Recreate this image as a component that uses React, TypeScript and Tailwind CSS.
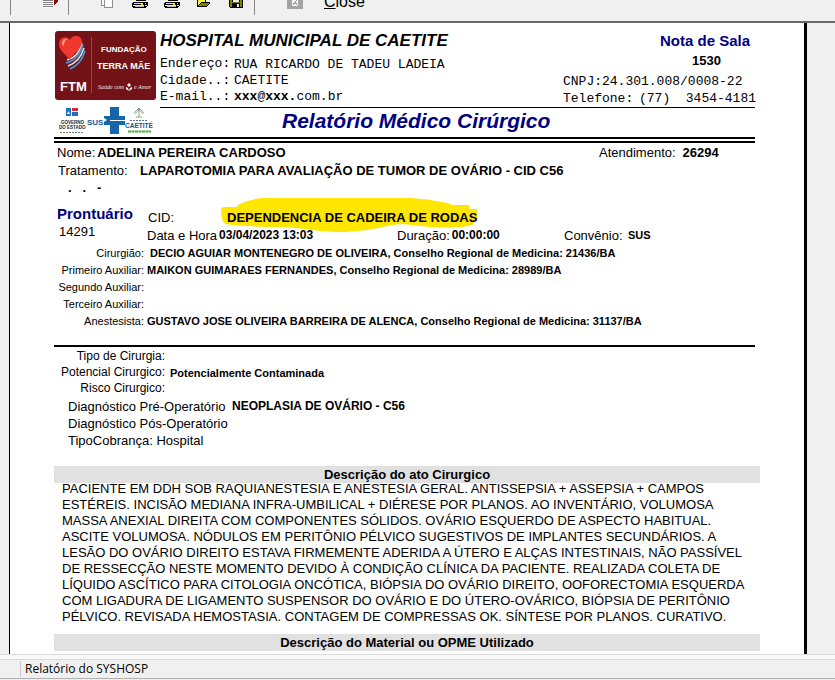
import type { ReactNode } from "react";

function FundacaoLogo() {
  return (
    <svg viewBox="0 0 101 69" className="block h-[69px] w-[101px]" role="img" aria-label="Fundação Terra Mãe">
      <rect width="101" height="69" rx="3" fill="#741317" />
      <g fill="none" strokeWidth="1.6">
        <path d="M12 29c8-2 12-7 15-17" stroke="#f4d9dc" />
        <path d="M11 32c9-2 14-8 17-18" stroke="#3f9bd4" />
        <path d="M13 35c8-3 13-8 16-18" stroke="#cfe4f2" />
        <path d="M15 38c7-3 12-8 15-18" stroke="#3f9bd4" />
      </g>
      <path d="M15 9C12 4 4 6 4 13c0 7 7 10 11 16 2-6 11-10 12-17 0-5-2-7-6-7-3 0-5 1-6 4z" fill="#f0382f" />
      <path d="M7 12c0-4 4-5 6-4-3 1-4 3-4 7-1 0-2-2-2-3z" fill="#ff9a8a" />
      <path d="M36.5 6V62" stroke="#94484b" strokeWidth="1" />
      <g fill="#fff" fontFamily="'Liberation Sans',sans-serif" fontWeight="700">
        <text x="5" y="60" fontSize="13">FTM</text>
        <text x="46" y="21" fontSize="8">FUNDAÇÃO</text>
        <text x="42" y="38" fontSize="9">TERRA MÃE</text>
      </g>
      <g fill="#f3e3e4" fontFamily="'Liberation Serif',serif" fontStyle="italic" fontSize="6">
        <text x="43" y="58">Saúde com</text>
        <text x="79" y="58">e Amor</text>
      </g>
      <path d="M74 52l2 2-2 2-2-2zM71 56l2 1 1 3-3-2zM77 56l-2 1-1 3 3-2z" fill="#fff" />
    </svg>
  );
}

function PartnerLogos() {
  return (
    <svg viewBox="0 0 101 29" className="block h-[29px] w-[101px]" role="img" aria-label="Governo do Estado, SUS, Caetité">
      <rect x="11" y="2" width="5" height="8" fill="#1d6fc0" />
      <rect x="17" y="2" width="6" height="3" fill="#e02530" />
      <rect x="17" y="6" width="6" height="4" fill="#1d6fc0" />
      <path d="M13.500 5l-1.500 3h3z" fill="#fff" />
      <g fill="#222" fontFamily="'Liberation Sans',sans-serif" fontWeight="700" fontSize="4.500">
        <text x="6" y="18">GOVERNO</text>
        <text x="4" y="23">DO ESTADO</text>
      </g>
      <path d="M5 26.500H28" stroke="#777" strokeDasharray="2 1" />
      <text x="32" y="19" fill="#0f5c9c" fontFamily="'Liberation Sans',sans-serif" fontWeight="700" fontSize="8">
        SUS
      </text>
      <path d="M55 1h9v9h6v9h-6v9h-9v-9h-6v-3l3-2-3-2v-2h6z" fill="#1565a9" />
      <path d="M55 14.500h15" fill="none" stroke="#fff" strokeWidth="1" />
      <path d="M84 2v9M79 7l5-5 5 5M80 8c2-2 3-3 4-5 1 2 2 3 4 5M81 11h6" fill="none" stroke="#6a8f6a" strokeWidth="0.8" />
      <path d="M75 14.500H93" stroke="#54708a" strokeDasharray="2 1" />
      <text x="70" y="22" fill="#0e4f90" fontFamily="'Liberation Sans',sans-serif" fontWeight="700" fontSize="6.500">
        CAETITÉ
      </text>
      <path d="M73 25.500H96" stroke="#4aa83c" strokeWidth="2" strokeDasharray="3 0.5" />
    </svg>
  );
}

function ToolButton({ label, className, children }: { label: string; className: string; children: ReactNode }) {
  return (
    <button type="button" aria-label={label} className={`block h-4 w-4 shrink-0 ${className}`}>
      <svg viewBox="0 0 16 16" className="block h-4 w-4" shapeRendering="crispEdges">
        {children}
      </svg>
    </button>
  );
}

function PrinterGlyph() {
  return (
    <>
      <path d="M4 0h9v3H4z" fill="#fff" />
      <path d="M4 0.500h10M3 2.500h10" stroke="#000" />
      <path d="M2 2h13l1 1v3l-3 2H1L0 7V3z" fill="#000" />
      <path d="M2 3h9v1H2zM1 5h11v1H1zM13 3h1v1h-1zM13 5h2v1h-2z" fill="#e6e6e6" />
      <path d="M9 4h2v1H9z" fill="#f2e400" />
      <path d="M3 6h9v1H3z" fill="#b5b5b5" />
    </>
  );
}

function Separator({ className }: { className: string }) {
  return <span className={`h-[15px] w-px shrink-0 bg-[#868686] ${className}`} />;
}

function Toolbar() {
  return (
    <header className="flex h-[21px] shrink-0 items-start" role="toolbar">
      <Separator className="ml-[10px]" />
      <ToolButton label="Ir para página" className="ml-8">
        <path d="M0 0h10v8H0z" fill="#fff" />
        <path d="M0 0.500h10M0 2.500h10M0 4.500h10M0 6.500h10" stroke="#808080" />
        <path d="M11 0h4v2l-2 1-2 2z" fill="#8b0000" />
      </ToolButton>
      <Separator className="ml-[9px]" />
      <ToolButton label="Copiar" className="ml-8">
        <path d="M1 0h2v5H1zM4 0h7v7H4z" fill="#fff" />
        <path d="M0.500 0v5.500h3M3.500 0v7.500h8V0" fill="none" stroke="#909090" />
      </ToolButton>
      <ToolButton label="Configurar impressão" className="ml-[15px]">
        <PrinterGlyph />
      </ToolButton>
      <ToolButton label="Imprimir" className="ml-4">
        <PrinterGlyph />
      </ToolButton>
      <ToolButton label="Abrir" className="ml-4">
        <path d="M1 0h9v2h4v1l-4 4H1z" fill="#000" />
        <path d="M2 0h7v2H5L2 5z" fill="#f5ee3a" />
        <path d="M5 3h8l-3 3H2z" fill="#808000" />
      </ToolButton>
      <ToolButton label="Salvar" className="ml-4">
        <path d="M1 0h14v8H2L1 7z" fill="#000" />
        <path d="M2 0h2v7H2zM12 0h2v7h-2zM4 2h8v1H4z" fill="#808000" />
        <path d="M5 0h6v2H5zM9 4h2v3H9z" fill="#e9e9e9" />
      </ToolButton>
      <Separator className="ml-[10px]" />
      <ToolButton label="Fechar visualização" className="ml-8">
        <path d="M0 0h16v9H0z" fill="#a3a3a3" />
        <path d="M5 0h6v6H5z" fill="#f4f4f4" />
        <path d="M6 5l2-3 2 3M10 0l-3 3" fill="none" stroke="#a3a3a3" />
      </ToolButton>
      <button type="button" className="-mt-2 ml-[21px] text-[16px] leading-5 text-black">
        <span className="underline">C</span>lose
      </button>
    </header>
  );
}

function ReportHeader() {
  return (
    <section className="flex h-[106px]">
      <div className="flex w-[105px] shrink-0 flex-col gap-[6px] pl-px">
        <FundacaoLogo />
        <PartnerLogos />
      </div>
      <div className="grow">
        <div className="ml-px flex h-[77px] justify-between border-b border-black">
          <div>
            <h1 className="text-[17px] leading-[19px] font-bold italic">HOSPITAL MUNICIPAL DE CAETITE</h1>
            <dl className="grid grid-cols-[74px_auto] pt-[5px] font-['Liberation_Mono',monospace] text-[13px] leading-[17px]">
              <dt>Endereço:</dt>
              <dd className="pt-px">RUA RICARDO DE TADEU LADEIA</dd>
              <dt className="-mt-px">Cidade..:</dt>
              <dd className="-mt-px">CAETITE</dd>
              <dt className="-mt-px">E-mail..:</dt>
              <dd className="-mt-px">
                <b className="font-bold">xxx</b>@<b className="font-bold">xxx.</b>com.br
              </dd>
            </dl>
          </div>
          <div className="w-[192px]">
            <h2 className="pr-[5px] text-right text-[15px] leading-[19px] font-bold text-[#000080]">Nota de Sala</h2>
            <p className="pt-[2px] pl-[95px] text-center text-[13px] leading-[17px] font-bold">1530</p>
            <dl className="grid grid-cols-[76px_auto] pt-1 font-['Liberation_Mono',monospace] text-[13px] leading-[17px] whitespace-pre">
              <div className="col-span-2 flex">
                <dt>CNPJ:</dt>
                <dd>24.301.008/0008-22</dd>
              </div>
              <dt>Telefone:</dt>
              <dd>(77)  3454-4181</dd>
            </dl>
          </div>
        </div>
        <h2 className="pl-[123px] text-[21px] leading-[26px] font-bold text-[#000080] italic">Relatório Médico Cirúrgico</h2>
      </div>
    </section>
  );
}

function Highlighter() {
  return (
    <svg viewBox="0 0 258 36" className="absolute -top-3 -left-[7px] -z-10 h-9 w-[258px]" aria-hidden="true">
      <path
        d="M1 12L3 10H17L18 8C26 4 34 2 42 1H190C205 2 222 4 233 8H249V12H257V23H254V27C245 31 230 31 210 30C195 29 185 26 172 28C150 33 135 35 118 35C100 35 85 31 60 30C40 30 15 29 6 27C2 25 1 20 1 12Z"
        fill="#ffe600"
      />
    </svg>
  );
}

function Patient() {
  return (
    <section className="pt-px text-[13px]">
      <div className="flex leading-[18px]">
        <p className="flex w-[545px] gap-[2px] pl-[3px]">
          Nome: <b className="font-bold">ADELINA PEREIRA CARDOSO</b>
        </p>
        <p>Atendimento:</p>
        <b className="pl-[7px] font-bold">26294</b>
      </div>
      <div className="flex leading-[18px]">
        <p className="w-[86px] pl-1">Tratamento:</p>
        <b className="font-bold">LAPAROTOMIA PARA AVALIAÇÃO DE TUMOR DE OVÁRIO - CID C56</b>
      </div>
      <p className="pl-[14px] leading-4 font-bold whitespace-pre">.   .   -</p>
      <div className="flex pt-[9px]">
        <div className="w-[93px] pl-[3px]">
          <h3 className="text-[15px] leading-[18px] font-bold text-[#000080]">Prontuário</h3>
          <p className="pl-[2px] leading-[17px]">14291</p>
        </div>
        <div className="pt-1">
          <div className="flex leading-[18px]">
            <p className="w-20 pl-px">CID:</p>
            <p className="relative isolate font-bold">
              <Highlighter />
              DEPENDENCIA DE CADEIRA DE RODAS
            </p>
          </div>
          <div className="flex leading-[17px]">
            <p className="flex w-[250px] gap-[2px]">
              Data e Hora <b className="text-[12px] font-bold">03/04/2023 13:03</b>
            </p>
            <p className="flex w-[167px] gap-[2px]">
              Duração: <b className="text-[12px] font-bold">00:00:00</b>
            </p>
            <p className="w-16">Convênio:</p>
            <b className="text-[11px] font-bold">SUS</b>
          </div>
        </div>
      </div>
    </section>
  );
}

const team = [
  ["Cirurgião:", " DECIO AGUIAR MONTENEGRO DE OLIVEIRA, Conselho Regional de Medicina: 21436/BA"],
  ["Primeiro Auxiliar:", "MAIKON GUIMARAES FERNANDES, Conselho Regional de Medicina: 28989/BA"],
  ["Segundo Auxiliar:", ""],
  ["Terceiro Auxiliar:", ""],
  ["Anestesista:", "GUSTAVO JOSE OLIVEIRA BARREIRA DE ALENCA, Conselho Regional de Medicina: 31137/BA"],
];

function Team() {
  return (
    <dl className="grid auto-rows-[17px] grid-cols-[90px_1fr] gap-x-[3px] border-b-2 border-black pt-px pb-[15px] text-[11px] leading-[17px] whitespace-pre">
      {team.map(([role, name]) => (
        <div key={role} className="contents">
          <dt className="text-right">{role}</dt>
          <dd className="font-bold">{name}</dd>
        </div>
      ))}
    </dl>
  );
}

function Surgery() {
  return (
    <section className="pt-px pb-[17px]">
      <dl className="grid auto-rows-[16px] grid-cols-[111px_1fr] gap-x-[5px] text-[12px] leading-4">
        <dt className="text-right">Tipo de Cirurgia:</dt>
        <dd />
        <dt className="text-right">Potencial Cirurgico:</dt>
        <dd className="pt-px text-[11px] font-bold">Potencialmente Contaminada</dd>
        <dt className="text-right">Risco Cirurgico:</dt>
        <dd />
      </dl>
      <div className="pt-[2px] pl-[14px] text-[13px] leading-[17px]">
        <div className="flex">
          <p className="w-[164px]">Diagnóstico Pré-Operatório</p>
          <b className="text-[12px] font-bold">NEOPLASIA DE OVÁRIO - C56</b>
        </div>
        <p>Diagnóstico Pós-Operatório</p>
        <p>TipoCobrança: Hospital</p>
      </div>
    </section>
  );
}

const description = `PACIENTE EM DDH SOB RAQUIANESTESIA E ANESTESIA GERAL. ANTISSEPSIA + ASSEPSIA + CAMPOS
ESTÉREIS. INCISÃO MEDIANA INFRA-UMBILICAL + DIÉRESE POR PLANOS. AO INVENTÁRIO, VOLUMOSA
MASSA ANEXIAL DIREITA COM COMPONENTES SÓLIDOS. OVÁRIO ESQUERDO DE ASPECTO HABITUAL.
ASCITE VOLUMOSA. NÓDULOS EM PERITÔNIO PÉLVICO SUGESTIVOS DE IMPLANTES SECUNDÁRIOS. A
LESÃO DO OVÁRIO DIREITO ESTAVA FIRMEMENTE ADERIDA A ÚTERO E ALÇAS INTESTINAIS, NÃO PASSÍVEL
DE RESSECÇÃO NESTE MOMENTO DEVIDO À CONDIÇÃO CLÍNICA DA PACIENTE. REALIZADA COLETA DE
LÍQUIDO ASCÍTICO PARA CITOLOGIA ONCÓTICA, BIÓPSIA DO OVÁRIO DIREITO, OOFORECTOMIA ESQUERDA
COM LIGADURA DE LIGAMENTO SUSPENSOR DO OVÁRIO E DO ÚTERO-OVÁRICO, BIÓPSIA DE PERITÔNIO
PÉLVICO. REVISADA HEMOSTASIA. CONTAGEM DE COMPRESSAS OK. SÍNTESE POR PLANOS. CURATIVO.`;

function SectionBar({ children }: { children: ReactNode }) {
  return <h3 className="bg-[#e1e1e1] text-center text-[13px] leading-[17px] font-bold">{children}</h3>;
}

export default function App() {
  return (
    <div className="flex min-h-screen flex-col bg-[#f0f0f0] font-['Liberation_Sans',Arial,sans-serif] text-black">
      <Toolbar />
      <main className="grow border-t-2 border-[#696969]">
        <article className="mr-7 ml-[9px] h-full border-r-[3px] border-l border-black bg-white pt-2 pr-11 pb-[3px] pl-11">
          <div className="mr-[5px] border-b-[6px] border-double border-black">
            <ReportHeader />
          </div>
          <div className="mr-[5px]">
            <Patient />
            <Team />
            <Surgery />
          </div>
          <SectionBar>Descrição do ato Cirurgico</SectionBar>
          <p className="-mt-[2px] pb-[9px] pl-2 text-[13px] leading-4 whitespace-pre">{description}</p>
          <SectionBar>Descrição do Material ou OPME Utilizado</SectionBar>
        </article>
      </main>
      <footer className="shrink-0 border-t border-[#dcdcdc]">
        <div className="h-1 bg-[#f8f8f8]" />
        <div className="border-y border-t-[#d7d7d7] border-b-[#b0b0b0] py-px">
          <p className="ml-5 border-l border-[#c8c8c8] pl-1 font-['Open_Sans','Noto_Sans',sans-serif] text-[12px] leading-4">
            Relatório do SYSHOSP
          </p>
        </div>
        <div className="h-px" />
      </footer>
    </div>
  );
}
